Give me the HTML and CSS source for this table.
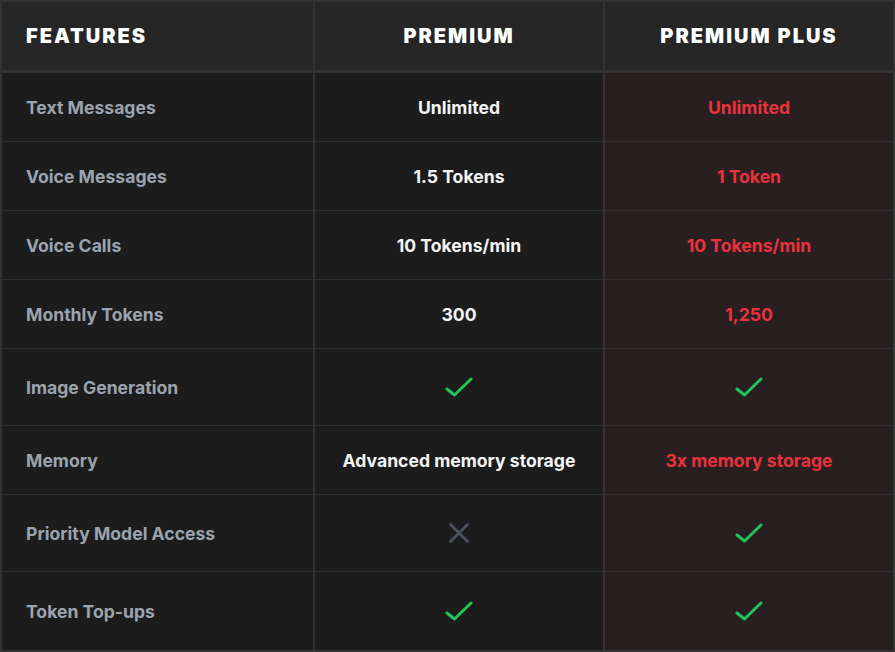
FILE: index.html
```html
<!DOCTYPE html>
<html lang="en">
<head>
<meta charset="utf-8">
<title>Plan comparison</title>
<link rel="stylesheet" href="styles.css">
</head>
<body>
<div class="table">
  <div class="row head">
    <div class="cell feat">FEATURES</div>
    <div class="cell">PREMIUM</div>
    <div class="cell plus">PREMIUM PLUS</div>
  </div>
  <div class="row">
    <div class="cell feat">Text Messages</div>
    <div class="cell val">Unlimited</div>
    <div class="cell val plus">Unlimited</div>
  </div>
  <div class="row">
    <div class="cell feat">Voice Messages</div>
    <div class="cell val">1.5 Tokens</div>
    <div class="cell val plus">1 Token</div>
  </div>
  <div class="row">
    <div class="cell feat">Voice Calls</div>
    <div class="cell val">10 Tokens/min</div>
    <div class="cell val plus">10 Tokens/min</div>
  </div>
  <div class="row">
    <div class="cell feat">Monthly Tokens</div>
    <div class="cell val">300</div>
    <div class="cell val plus">1,250</div>
  </div>
  <div class="row icons">
    <div class="cell feat">Image Generation</div>
    <div class="cell val"><svg class="ico" viewBox="0 0 28 28"><path class="check" d="M2 16 L9.5 22 L26 6"/></svg></div>
    <div class="cell val plus"><svg class="ico" viewBox="0 0 28 28"><path class="check" d="M2 16 L9.5 22 L26 6"/></svg></div>
  </div>
  <div class="row">
    <div class="cell feat">Memory</div>
    <div class="cell val">Advanced memory storage</div>
    <div class="cell val plus">3x memory storage</div>
  </div>
  <div class="row icons">
    <div class="cell feat">Priority Model Access</div>
    <div class="cell val"><svg class="ico" viewBox="0 0 28 28"><path class="cross" d="M5.5 5.5 L22.5 22.5 M22.5 5.5 L5.5 22.5"/></svg></div>
    <div class="cell val plus"><svg class="ico" viewBox="0 0 28 28"><path class="check" d="M2 16 L9.5 22 L26 6"/></svg></div>
  </div>
  <div class="row icons last">
    <div class="cell feat">Token Top-ups</div>
    <div class="cell val"><svg class="ico" viewBox="0 0 28 28"><path class="check" d="M2 16 L9.5 22 L26 6"/></svg></div>
    <div class="cell val plus"><svg class="ico" viewBox="0 0 28 28"><path class="check" d="M2 16 L9.5 22 L26 6"/></svg></div>
  </div>
</div>
</body>
</html>
```
FILE: styles.css
```css
* { box-sizing: border-box; }
html, body { margin: 0; padding: 0; background: #1c1c1c; }
body {
  font-family: Inter, "Noto Sans", "Liberation Sans", sans-serif;
  width: 895px;
  height: 652px;
}
.table {
  border: 2px solid #333333;
  background: #333333;
  display: flex;
  flex-direction: column;
  height: 652px;
}
.row {
  display: grid;
  grid-template-columns: 311px 288px 1fr;
  column-gap: 2px;
}
.cell {
  background: #1c1c1c;
  border-bottom: 1px solid #2e2e2e;
  height: 69px;
  display: flex;
  align-items: center;
  justify-content: center;
  font-size: 17.6px;
  font-weight: 650;
  color: #f4f4f4;
  padding-top: 1px;
}
.cell.plus { background: #2a1f20; }
.cell.val.plus { color: #ea323d; }
.cell.feat {
  justify-content: flex-start;
  padding-left: 24px;
  color: #9ba3ae;
}
.row.icons .cell { height: 77px; padding-top: 0; }
.row.last .cell { border-bottom: none; height: 78px; }
.row.head .cell {
  background: #262626;
  border-bottom: 3px solid #333333;
  height: 71px;
  padding-top: 0;
  color: #ffffff;
  font-size: 20px;
  font-weight: 900;
  letter-spacing: 2px;
}
.row.head .cell.feat { color: #ffffff; }
.ico { width: 28px; height: 28px; display: block; }
.check {
  fill: none;
  stroke: #1fc55a;
  stroke-width: 3;
  stroke-linecap: round;
  stroke-linejoin: round;
}
.cross {
  fill: none;
  stroke: #4a5260;
  stroke-width: 2.6;
  stroke-linecap: round;
}
```
